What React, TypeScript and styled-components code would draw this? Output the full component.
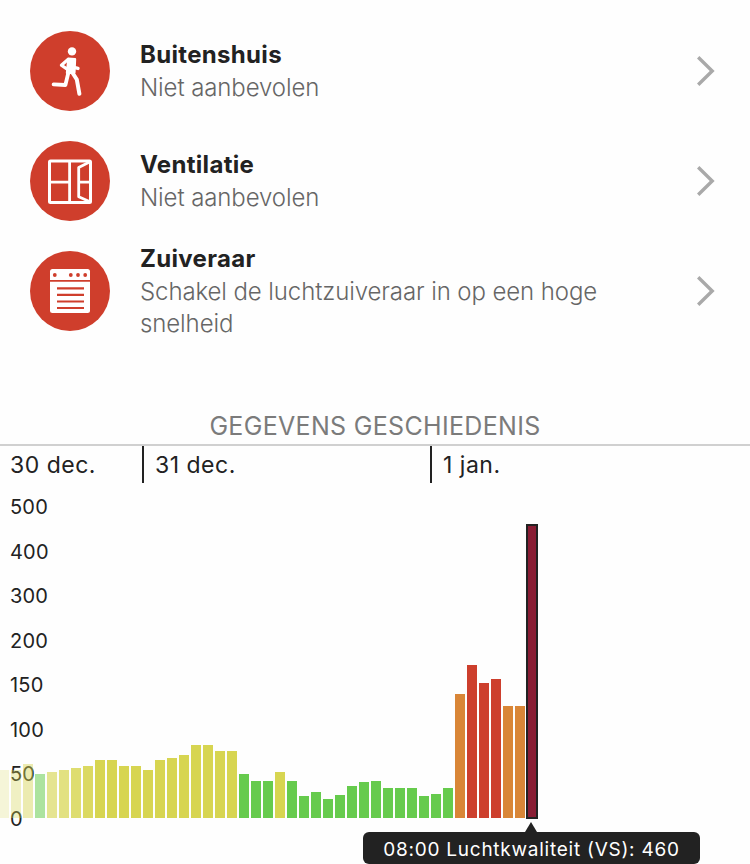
import React from "react";
import styled, { createGlobalStyle } from "styled-components";

const GlobalStyle = createGlobalStyle`
  * { box-sizing: border-box; }
  body {
    margin: 0;
    background: #fefefe;
    color: #222;
    font-family: Inter, "Liberation Sans", sans-serif;
    overflow: hidden;
  }
`;

const Page = styled.main`
  width: 750px;
  height: 864px;
  overflow: hidden;
  display: flex;
  flex-direction: column;
`;

const AdviceList = styled.div`
  display: flex;
  flex: none;
  flex-direction: column;
  padding-top: 16px;
  height: 410px;
`;

const AdviceRow = styled.div`
  display: flex;
  align-items: center;
  height: 110px;
  padding: 0 34px 0 30px;
`;

const Badge = styled.div`
  display: flex;
  flex: none;
  width: 80px;
  height: 80px;
  border-radius: 50%;
  background: #cf3e2c;
`;

const AdviceText = styled.div`
  flex: 1;
  padding-left: 30px;
`;

const AdviceTitle = styled.div`
  margin-top: -1px;
  padding-bottom: 1px;
  font-size: 24px;
  font-weight: 700;
  line-height: 33px;
  letter-spacing: 0.32px;
`;

const AdviceDetail = styled.div`
  max-width: 480px;
  font-size: 24px;
  font-weight: 300;
  line-height: 32px;
  letter-spacing: -0.1px;
  color: #666;
`;

const Chevron = styled.svg`
  flex: none;
  width: 20px;
  height: 32px;
`;

const HistoryHeading = styled.h2`
  flex: none;
  margin: 0;
  height: 36px;
  padding-top: 1px;
  border-bottom: 2px solid #d0d0d0;
  text-align: center;
  font-size: 25px;
  font-weight: 400;
  line-height: 31px;
  letter-spacing: 0.32px;
  color: #7b7b7b;
`;

const Days = styled.div`
  display: flex;
  flex: none;
  height: 37px;
`;

const Day = styled.div<{ $width: number; $first?: boolean }>`
  width: ${(p) => p.$width}px;
  flex: none;
  padding-left: ${(p) => (p.$first ? 10 : 11)}px;
  border-left: ${(p) => (p.$first ? "none" : "2px solid #222")};
  font-size: 23px;
  line-height: 38px;
  letter-spacing: 0.5px;
`;

const Chart = styled.div`
  display: grid;
  height: 336px;
  flex: none;
`;

const Scale = styled.div`
  grid-area: 1 / 1;
  display: flex;
  flex-direction: column;
  height: 335px;
  padding: 1px 0 0 10px;
`;

const Tick = styled.div`
  flex: none;
  height: 44.55px;
  line-height: 46px;
  font-size: 20px;
  letter-spacing: 0.2px;
`;

const Bars = styled.div`
  grid-area: 1 / 1;
  display: flex;
  align-items: flex-end;
  gap: 2px;
  height: 335px;
  margin-left: -1px;
  z-index: 1;
`;

const Bar = styled.div<{ $height: number; $color: string; $opacity: number }>`
  flex: none;
  width: 10px;
  height: ${(p) => p.$height}px;
  background: ${(p) => p.$color};
  opacity: ${(p) => p.$opacity};
`;

const SelectedBar = styled.div`
  flex: none;
  width: 12px;
  height: 295px;
  margin: 0 0 -1px -1px;
  border: 2px solid #222;
  background: #891d34;
`;

const Callout = styled.div`
  display: flex;
  flex: none;
  flex-direction: column;
  width: 337px;
  margin: 3px 0 0 363px;
`;

const Pointer = styled.svg`
  width: 12px;
  height: 10px;
  margin-left: 162px;
`;

const CalloutLabel = styled.div`
  height: 32px;
  border-radius: 6px;
  background: #222;
  color: #fff;
  text-align: center;
  white-space: nowrap;
  font-size: 19px;
  line-height: 35px;
  letter-spacing: 0.75px;
`;

const YELLOW = "#d7d551";
const GREEN = "#66cb4d";
const ORANGE = "#d98637";
const RED = "#cd3f2d";

type Reading = [height: number, color: string, opacity?: number];

const readings: Reading[] = [
  [48, YELLOW, 0.22],
  [48, YELLOW, 0.34],
  [54, YELLOW, 0.45],
  [44.5, GREEN, 0.54],
  [46.5, YELLOW, 0.64],
  [48, YELLOW, 0.72],
  [50, YELLOW, 0.82],
  [52, YELLOW, 0.91],
  [58, YELLOW],
  [58, YELLOW],
  [52, YELLOW],
  [52, YELLOW],
  [48, YELLOW],
  [58, YELLOW],
  [60, YELLOW],
  [63.5, YELLOW],
  [73, YELLOW],
  [73, YELLOW],
  [67.3, YELLOW],
  [67.3, YELLOW],
  [44.5, GREEN],
  [37, GREEN],
  [37, GREEN],
  [46.5, YELLOW],
  [37, GREEN],
  [22, GREEN],
  [26, GREEN],
  [19, GREEN],
  [23, GREEN],
  [32, GREEN],
  [36, GREEN],
  [37, GREEN],
  [29.7, GREEN],
  [29.7, GREEN],
  [29.7, GREEN],
  [22, GREEN],
  [24, GREEN],
  [30.5, GREEN],
  [124, ORANGE],
  [153, RED],
  [135, RED],
  [139, RED],
  [112.5, ORANGE],
  [112.5, ORANGE],
];

const RunnerIcon = () => (
  <svg width="80" height="80" viewBox="0 0 80 80" fill="none" stroke="#fff" strokeLinecap="round" strokeLinejoin="round">
    <circle cx="42" cy="20.4" r="4.2" fill="#fff" stroke="none" />
    <path d="M38.4 27.8 45 28.2 44.4 41.5 37 42z" fill="#fff" strokeWidth="2.4" />
    <path d="M38 28.4 31.4 34.2 36.4 37.6" strokeWidth="3.2" />
    <path d="M44 36.4 48 37.4" strokeWidth="3.4" />
    <path d="M38.4 41.5 35.4 54 23.6 53.4" strokeWidth="3.8" />
    <path d="M42 41 46.8 48.5 49.4 62.8" strokeWidth="4" />
  </svg>
);

const WindowIcon = () => (
  <svg width="80" height="80" viewBox="0 0 80 80" fill="none" stroke="#fff" strokeLinejoin="round">
    <rect x="19.5" y="20" width="41" height="41.5" rx="1" strokeWidth="3" />
    <path d="M39.6 20V61.5M20 41.2h19.6M50 41.2h10" strokeWidth="2.8" />
    <path d="M60.5 20.5 48.7 26.4V55.8L60.5 61" strokeWidth="2.8" />
  </svg>
);

const PurifierIcon = () => (
  <svg width="80" height="80" viewBox="0 0 80 80">
    <rect x="20" y="18" width="40" height="44" rx="2.5" fill="#fff" />
    <path d="M20 29.9h40" stroke="#cf3e2c" strokeWidth="1.8" />
    <g fill="#cf3e2c">
      <circle cx="24.8" cy="24" r="1.9" />
      <circle cx="40.8" cy="24" r="1.9" />
      <circle cx="48" cy="24" r="1.9" />
      <circle cx="55.2" cy="24" r="1.9" />
    </g>
    <path d="M27 37.4h27M27 43.9h27M27 50.5h27M27 57h27" stroke="#cf3e2c" strokeWidth="2.2" />
  </svg>
);

const advice = [
  { title: "Buitenshuis", detail: "Niet aanbevolen", Icon: RunnerIcon },
  { title: "Ventilatie", detail: "Niet aanbevolen", Icon: WindowIcon },
  { title: "Zuiveraar", detail: "Schakel de luchtzuiveraar in op een hoge snelheid", Icon: PurifierIcon },
];

const ticks = [500, 400, 300, 200, 150, 100, 50, 0];

export default function App() {
  return (
    <Page>
      <GlobalStyle />
      <AdviceList>
        {advice.map(({ title, detail, Icon }) => (
          <AdviceRow key={title}>
            <Badge>
              <Icon />
            </Badge>
            <AdviceText>
              <AdviceTitle>{title}</AdviceTitle>
              <AdviceDetail>{detail}</AdviceDetail>
            </AdviceText>
            <Chevron viewBox="0 0 20 32" fill="none">
              <path d="M2.2 2.3 16.2 16 2.2 29.8" stroke="#a9a9a9" strokeWidth="3.4" />
            </Chevron>
          </AdviceRow>
        ))}
      </AdviceList>
      <HistoryHeading>GEGEVENS GESCHIEDENIS</HistoryHeading>
      <Days>
        <Day $width={142} $first>30 dec.</Day>
        <Day $width={288}>31 dec.</Day>
        <Day $width={320}>1 jan.</Day>
      </Days>
      <Chart>
        <Scale>
          {ticks.map((tick) => (
            <Tick key={tick}>{tick}</Tick>
          ))}
        </Scale>
        <Bars>
          {readings.map(([height, color, opacity = 1], i) => (
            <Bar key={i} $height={height} $color={color} $opacity={opacity} />
          ))}
          <SelectedBar />
        </Bars>
      </Chart>
      <Callout>
        <Pointer viewBox="0 0 12 10">
          <path d="M6 0 12 10H0z" fill="#222" />
        </Pointer>
        <CalloutLabel>08:00 Luchtkwaliteit (VS): 460</CalloutLabel>
      </Callout>
    </Page>
  );
}
